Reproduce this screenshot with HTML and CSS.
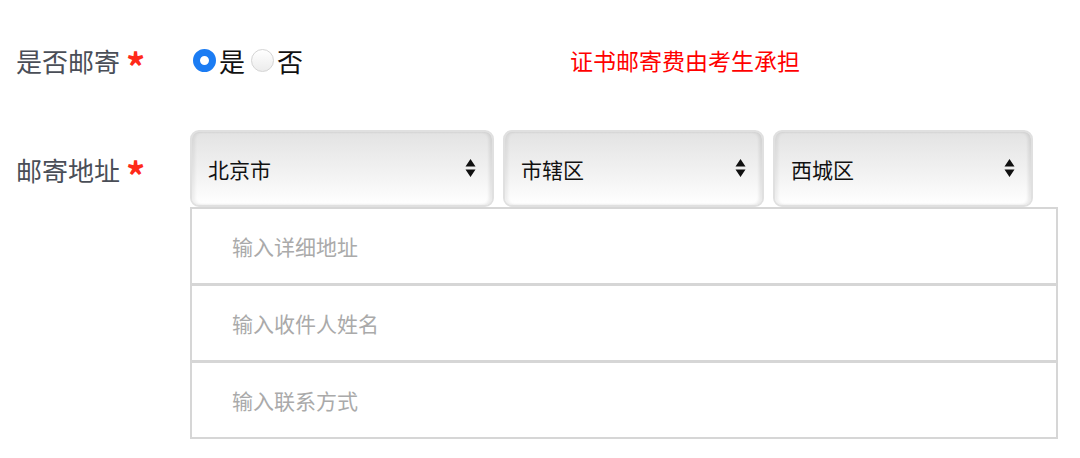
FILE: index.html
```html
<!DOCTYPE html>
<html lang="zh-CN">
<head>
  <meta charset="UTF-8">
  <title>邮寄信息</title>
  <link rel="stylesheet" href="styles.css">
</head>
<body>
  <form class="mail-form">
    <div class="form-row row-mail">
      <label class="field-label">是否邮寄<span class="req">*</span></label>
      <div class="radio-group">
        <label class="radio-item"><input type="radio" name="mail" value="1" checked>是</label>
        <label class="radio-item"><input type="radio" name="mail" value="0">否</label>
      </div>
      <span class="notice">证书邮寄费由考生承担</span>
    </div>

    <div class="form-row row-address">
      <label class="field-label">邮寄地址<span class="req">*</span></label>
      <div class="address-box">
        <div class="select-line">
          <div class="select-wrap sel-province">
            <select name="province"><option>北京市</option></select>
            <svg class="arrows" width="11" height="20" viewBox="0 0 11 20"><path d="M5.5 1 L10.5 8.5 H0.5 Z M5.5 19 L10.5 11.5 H0.5 Z" fill="#111"/></svg>
          </div>
          <div class="select-wrap sel-city">
            <select name="city"><option>市辖区</option></select>
            <svg class="arrows" width="11" height="20" viewBox="0 0 11 20"><path d="M5.5 1 L10.5 8.5 H0.5 Z M5.5 19 L10.5 11.5 H0.5 Z" fill="#111"/></svg>
          </div>
          <div class="select-wrap sel-district">
            <select name="district"><option>西城区</option></select>
            <svg class="arrows" width="11" height="20" viewBox="0 0 11 20"><path d="M5.5 1 L10.5 8.5 H0.5 Z M5.5 19 L10.5 11.5 H0.5 Z" fill="#111"/></svg>
          </div>
        </div>
        <input class="text-input" type="text" placeholder="输入详细地址">
        <input class="text-input" type="text" placeholder="输入收件人姓名">
        <input class="text-input" type="text" placeholder="输入联系方式">
      </div>
    </div>
  </form>
</body>
</html>
```

FILE: styles.css
```css
body {
  margin: 0;
  background: #fff;
  font-family: "Noto Sans CJK SC", "Noto Sans", sans-serif;
}

.mail-form {
  padding: 38px 0 0 16px;
}

.form-row {
  display: flex;
}

.field-label {
  display: flex;
  align-items: center;
  width: 177px;
  flex-shrink: 0;
  font-size: 26px;
  color: #4a4e57;
  height: 44px;
}

.req {
  color: #ff2a1a;
  font-size: 38px;
  font-weight: bold;
  line-height: 1;
  margin: 12px 0 0 6px;
}

.row-mail {
  align-items: center;
  height: 44px;
}

.radio-group {
  display: flex;
  align-items: center;
  gap: 6px;
  width: 120px;
}

.radio-item {
  display: flex;
  align-items: center;
  font-size: 26px;
  color: #111;
  gap: 3px;
}

.radio-item input {
  appearance: none;
  -webkit-appearance: none;
  margin: 0;
  width: 23px;
  height: 23px;
  border-radius: 50%;
  border: 1px solid #d4d4d4;
  background: linear-gradient(#fff, #ececec);
  box-sizing: border-box;
}

.radio-item input:checked {
  border: 7px solid #1b7cf3;
  background: #fff;
}

.notice {
  margin-left: 257px;
  font-size: 23px;
  color: #ff0000;
}

.row-address {
  margin-top: 48px;
}

.row-address .field-label {
  margin-top: 17px;
}

.address-box {
  width: 868px;
  margin-left: -3px;
}

.select-line {
  display: flex;
  gap: 9px;
  height: 77px;
}

.select-wrap {
  position: relative;
}

.sel-province { width: 304px; }
.sel-city { width: 261px; }
.sel-district { width: 260px; }

.select-wrap select {
  appearance: none;
  -webkit-appearance: none;
  width: 100%;
  height: 100%;
  padding: 0 0 0 16px;
  border: 2px solid #e0e0e0;
  border-radius: 9px;
  background: linear-gradient(#e3e3e3, #f3f3f3 60%, #fff);
  box-shadow: inset 3px 0 3px rgba(0, 0, 0, 0.06), inset -3px 0 3px rgba(0, 0, 0, 0.08);
  font-family: inherit;
  font-size: 21px;
  color: #111;
}

.arrows {
  position: absolute;
  right: 18px;
  top: 28px;
  pointer-events: none;
}

.text-input {
  display: block;
  width: 100%;
  height: 78px;
  box-sizing: border-box;
  margin: 0;
  border: 2px solid #d6d6d6;
  padding: 0 0 0 40px;
  font-family: inherit;
  font-size: 21px;
  outline: none;
}

.text-input + .text-input {
  margin-top: -1px;
}

.text-input::placeholder {
  color: #aaa;
}
```
